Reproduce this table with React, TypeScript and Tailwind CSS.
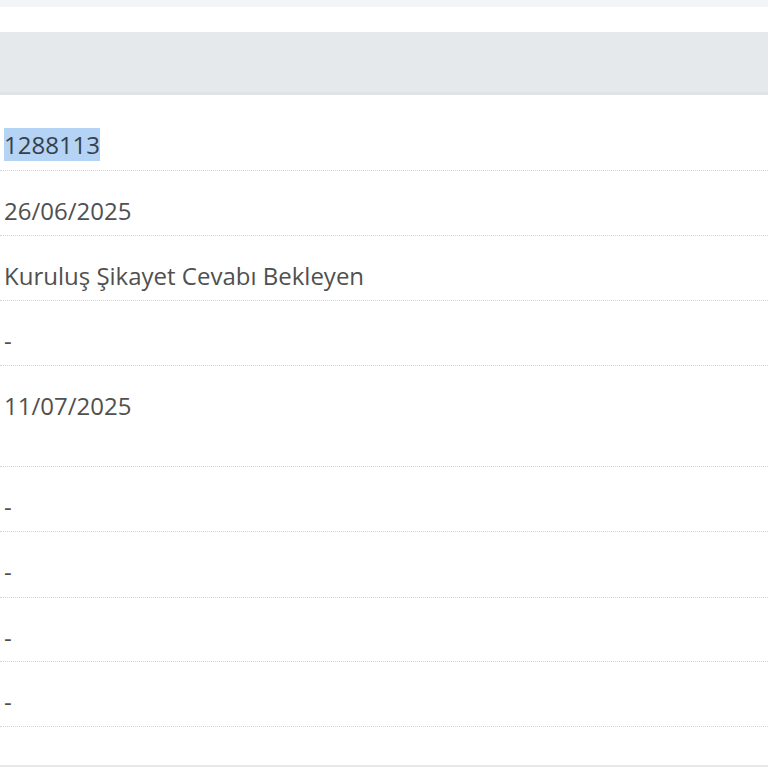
const rows: { value: string; pt: string; h: string; selected?: boolean }[] = [
  { value: "1288113", pt: "pt-[35px]", h: "h-[76px]", selected: true },
  { value: "26/06/2025", pt: "pt-[25px]", h: "h-[65px]" },
  { value: "Kuruluş Şikayet Cevabı Bekleyen", pt: "pt-[25px]", h: "h-[65px]" },
  { value: "-", pt: "pt-[25px]", h: "h-[65px]" },
  { value: "11/07/2025", pt: "pt-[25px]", h: "h-[101px]" },
  { value: "-", pt: "pt-[25px]", h: "h-[65px]" },
  { value: "-", pt: "pt-[25px]", h: "h-[66px]" },
  { value: "-", pt: "pt-[25px]", h: "h-[64px]" },
  { value: "-", pt: "pt-[25px]", h: "h-[65px]" },
]

export default function App() {
  return (
    <div className="w-[768px] h-[768px] overflow-hidden bg-white font-['Open_Sans',sans-serif]">
      <div className="h-[7px] bg-[#f3f4f5]" />
      <div className="h-[25px] bg-white" />
      <div className="h-[63px] bg-[#e6e9ec] border-b-[3px] border-[#e0e3e6]" />
      <div className="flex flex-col">
        {rows.map((r, i) => (
          <div
            key={i}
            className={`${r.h} ${r.pt} pl-[4px] border-b border-dotted border-[#cdd5de] text-[24px] leading-[30px] text-[#505050]`}
          >
            {r.selected ? <span className="bg-[#b4d3f5] text-[#36404a]">{r.value}</span> : r.value}
          </div>
        ))}
      </div>
      <div className="h-[38px]" />
      <div className="h-[2px] bg-[#e6e8ea]" />
    </div>
  )
}
